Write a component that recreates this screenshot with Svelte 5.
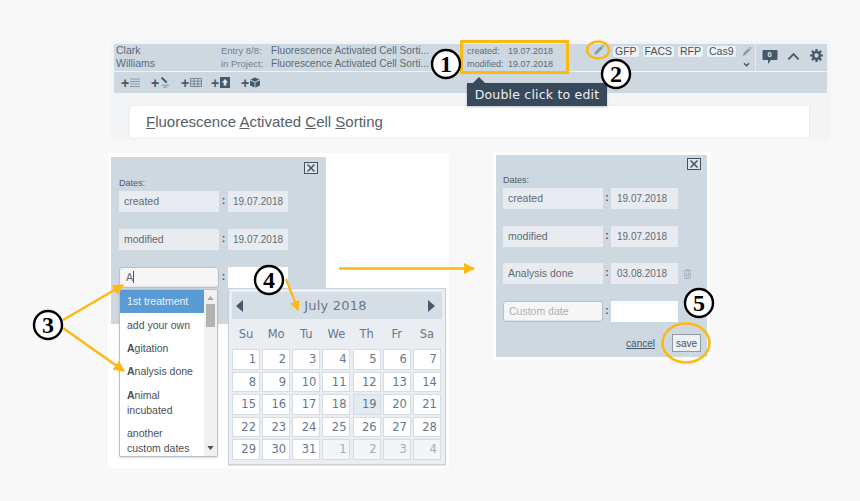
<script>
    const tags = ["GFP", "FACS", "RFP", "Cas9"];
    const weekdays = ["Su", "Mo", "Tu", "We", "Th", "Fr", "Sa"];
    const options = [
        { rest: "1st treatment", active: true },
        { rest: "add your own" },
        { first: "A", rest: "gitation" },
        { first: "A", rest: "nalysis done" },
        { first: "A", rest: "nimal", second: "incubated" },
        { rest: "another", second: "custom dates" }
    ];

    let days = [];
    for (let d = 1; d <= 31; d++) days.push({ n: d });
    for (let d = 1; d <= 4; d++) days.push({ n: d, muted: true });
</script>

<div class="figure">
    <!-- top: entry header -->
    <section class="entry">
        <div class="bar">
            <div class="row-main">
                <div class="owner">Clark<br />Williams</div>
                <div class="labels">Entry 8/8:<br />in Project:</div>
                <div class="titles">Fluorescence Activated Cell Sorti...<br />Fluorescence Activated Cell Sorti...</div>
                <div class="stamps">
                    <span>created:</span><span>19.07.2018</span>
                    <span>modified:</span><span>19.07.2018</span>
                </div>
                <svg class="pencil" viewBox="0 0 12 12"><path d="M.5 11.500l.7-3.200L8 1.500 10.500 4 3.700 10.800zM8.800.8l.7-.5a1 1 0 0 1 1.200 0l1 1a1 1 0 0 1 0 1.200l-.5.700z" fill="#8a98a5" /></svg>
                <div class="tags">
                    {#each tags as tag}
                        <span class="tag">{tag}</span>
                    {/each}
                </div>
                <div class="tag-tools">
                    <svg viewBox="0 0 12 12"><path d="M.5 11.500l.7-3.200L8 1.500 10.500 4 3.700 10.800zM8.800.8l.7-.5a1 1 0 0 1 1.200 0l1 1a1 1 0 0 1 0 1.200l-.5.700z" fill="#8a98a5" /></svg>
                    <svg class="more" viewBox="0 0 12 8"><path d="M2 2l4 4 4-4" fill="none" stroke="#46535f" stroke-width="2.200" /></svg>
                </div>
                <div class="actions">
                    <span class="comment">
                        <svg viewBox="0 0 16 16"><path d="M1.500 1h13a1 1 0 0 1 1 1v8a1 1 0 0 1-1 1H9l-3 4v-4H1.500a1 1 0 0 1-1-1V2a1 1 0 0 1 1-1z" fill="#46596a" /></svg>
                        <b>0</b>
                    </span>
                    <svg class="up" viewBox="0 0 14 9"><path d="M1.500 7.500L7 2l5.500 5.500" fill="none" stroke="#46596a" stroke-width="2" /></svg>
                    <svg class="gear" viewBox="0 0 14 14">
                        <circle cx="7" cy="7" r="3.600" fill="none" stroke="#46596a" stroke-width="2.600" />
                        <path d="M7 0v3M7 11v3M0 7h3M11 7h3M2 2l2 2M10 10l2 2M12 2l-2 2M4 10l-2 2" stroke="#46596a" stroke-width="2.400" />
                    </svg>
                </div>
            </div>
            <div class="toolbar">
                <span class="tool"><i>+</i>
                    <svg viewBox="0 0 10 10"><path d="M0 1.500h10M0 4h10M0 6.500h10M0 9h10" stroke="#8d9aa6" stroke-width="1" /></svg>
                </span>
                <span class="tool"><i>+</i>
                    <svg viewBox="0 0 10 13"><path d="M0 1.500L1.800 0l6 5.500-1.600 2z" fill="#46596a" /><path d="M1 10c2-2 3 1 4.500 0s2.500-1 4 0M3 12.500c2-1 3 0 5-1" fill="none" stroke="#6f7d8a" stroke-width="1" /></svg>
                </span>
                <span class="tool"><i>+</i>
                    <svg class="wide" viewBox="0 0 12 9"><path d="M.5.500h11v8H.500zM.5 3.200h11M.5 5.900h11M4.200.5v8M7.900.5v8" fill="none" stroke="#7a8794" stroke-width="1" /></svg>
                </span>
                <span class="tool"><i>+</i>
                    <svg viewBox="0 0 10 11"><path d="M0 0h10v11H0z" fill="#46596a" /><path d="M5 2l3.200 3.500H6.300v3H3.700v-3H1.800z" fill="#dfe6ec" /></svg>
                </span>
                <span class="tool"><i>+</i>
                    <svg viewBox="0 0 12 12"><path d="M6 0l5.500 2.500L6 5 .5 2.500z" fill="#46596a" /><path d="M0 3.500l5.500 2.500v6L0 9.500zM12 3.500L6.500 6v6l5.500-2.500z" fill="#46596a" /></svg>
                </span>
            </div>
        </div>
        <div class="entry-body">
            <h1><u>F</u>luorescence <u>A</u>ctivated <u>C</u>ell <u>S</u>orting</h1>
        </div>
    </section>

    <div class="tooltip">Double click to edit</div>

    <!-- left: picking a custom date -->
    <section class="sheet">
        <div class="dialog dialog-left">
            <div class="close-row">
                <span class="close"><svg viewBox="0 0 12 10"><path d="M2.500 1.500l7 7M9.500 1.500l-7 7" stroke="#46535f" stroke-width="1.500" /></svg></span>
            </div>
            <div class="dates-label">Dates:</div>
            <div class="date-row">
                <span class="name">created</span><span class="colon">:</span><span class="value">19.07.2018</span>
            </div>
            <div class="date-row">
                <span class="name">modified</span><span class="colon">:</span><span class="value">19.07.2018</span>
            </div>
            <div class="date-row">
                <span class="name input typed">A<span class="caret"></span></span><span class="colon">:</span><span class="value blank"></span>
            </div>
        </div>

        <div class="dropdown">
            <ul>
                {#each options as opt}
                    <li class:active={opt.active}>
                        <div>{#if opt.first}<b>{opt.first}</b>{/if}{opt.rest}</div>
                        {#if opt.second}<div>{opt.second}</div>{/if}
                    </li>
                {/each}
            </ul>
            <div class="scrollbar">
                <svg viewBox="0 0 8 5"><path d="M4 0l4 5H0z" fill="#a8a8a8" /></svg>
                <span class="thumb"></span>
                <svg class="down" viewBox="0 0 8 5"><path d="M4 5L0 0h8z" fill="#505050" /></svg>
            </div>
        </div>

        <div class="calendar">
            <div class="cal-head">
                <svg viewBox="0 0 7 12"><path d="M7 0v12L0 6z" fill="#45596c" /></svg>
                <span>July 2018</span>
                <svg viewBox="0 0 7 12"><path d="M0 0v12l7-6z" fill="#45596c" /></svg>
            </div>
            <div class="cal-days">
                {#each weekdays as w}
                    <span>{w}</span>
                {/each}
            </div>
            <div class="cal-grid">
                {#each days as d}
                    <span class="cell" class:muted={d.muted} class:today={d.n === 19 && !d.muted}>{d.n}</span>
                {/each}
            </div>
        </div>
    </section>

    <!-- right: result -->
    <section class="dialog dialog-right">
        <div class="close-row">
            <span class="close"><svg viewBox="0 0 12 10"><path d="M2.500 1.500l7 7M9.500 1.500l-7 7" stroke="#46535f" stroke-width="1.500" /></svg></span>
        </div>
        <div class="dates-label">Dates:</div>
        <div class="date-row">
            <span class="name">created</span><span class="colon">:</span><span class="value">19.07.2018</span>
        </div>
        <div class="date-row">
            <span class="name">modified</span><span class="colon">:</span><span class="value">19.07.2018</span>
        </div>
        <div class="date-row">
            <span class="name">Analysis done</span><span class="colon">:</span><span class="value">03.08.2018</span>
            <svg class="trash" viewBox="0 0 10 11"><path d="M1 2h8M3.500 2V.8h3V2M2 3v7.500h6V3M4 4v5M6 4v5" fill="none" stroke="#98a6b2" stroke-width=".9" /></svg>
        </div>
        <div class="date-row">
            <span class="name input placeholder">Custom date</span><span class="colon">:</span><span class="value blank"></span>
        </div>
        <div class="dialog-foot">
            <a href="#cancel">cancel</a>
            <button type="button">save</button>
        </div>
    </section>

    <!-- callouts drawn over the screenshots -->
    <svg class="callouts" viewBox="0 0 860 501">
        <defs>
            <marker id="head" viewBox="0 0 10 10" refX="9" refY="5" markerWidth="4.500" markerHeight="4.500" orient="auto">
                <path d="M0 0l10 5-10 5z" fill="#fdb913" />
            </marker>
        </defs>
        <g fill="none" stroke="#fdb913">
            <rect x="461.500" y="41.500" width="106" height="31" stroke-width="3" />
            <ellipse cx="598" cy="50" rx="11" ry="8.500" stroke-width="2.500" />
            <ellipse cx="686" cy="343" rx="23.500" ry="19.500" stroke-width="2.500" />
            <path d="M339 268.500H474" stroke-width="2.500" marker-end="url(#head)" />
            <path d="M63 320L123 285" stroke-width="2.500" marker-end="url(#head)" />
            <path d="M63 328L124 371" stroke-width="2.500" marker-end="url(#head)" />
            <path d="M286 279L298 310" stroke-width="2.200" marker-end="url(#head)" />
        </g>
        {#each [[446, 64, 1], [616, 74, 2], [48, 325, 3], [269, 280, 4], [699, 303, 5]] as [cx, cy, n]}
            <circle {cx} {cy} r="14" fill="#fff" stroke="#000" stroke-width="2.400" />
            <text x={cx} y={cy + 8} text-anchor="middle">{n}</text>
        {/each}
    </svg>
</div>

<style>
    :global(body) {
        margin: 0;
        background: #f8f8f8;
    }
    .figure {
        position: relative;
        width: 860px;
        height: 501px;
        overflow: hidden;
        font-family: "Liberation Sans", Arial, sans-serif;
        color: #5d6b78;
    }

    .entry {
        position: absolute;
        left: 111px;
        top: 41px;
        width: 719px;
        height: 99px;
        box-sizing: border-box;
        padding: 3px 3px 0 3px;
        background: #f2f4f6;
    }
    .bar {
        background: #cdd8e1;
    }
    .row-main {
        display: flex;
        height: 27px;
        border-bottom: 1px solid #f0f3f5;
        font-size: 10.500px;
        line-height: 13px;
    }
    .owner {
        width: 105px;
        padding-left: 2px;
    }
    .labels {
        width: 50px;
        font-size: 9.500px;
        color: #74818d;
    }
    .titles {
        width: 196px;
        font-size: 10.200px;
        white-space: nowrap;
    }
    .stamps {
        display: grid;
        grid-template-columns: 41px auto;
        align-content: start;
        width: 127px;
        padding-top: 1px;
        font-size: 9px;
        line-height: 13px;
    }
    .pencil {
        width: 10px;
        height: 10px;
        margin-top: 1px;
    }
    .tags {
        display: flex;
        gap: 4px;
        margin-left: 9px;
        padding-top: 2px;
    }
    .tag {
        height: 11px;
        padding: 0 2px;
        background: #eef1f4;
        border-radius: 2px;
        font-size: 10.500px;
        line-height: 11px;
        color: #46535f;
    }
    .tag-tools {
        display: flex;
        flex-direction: column;
        align-items: center;
        gap: 6px;
        width: 14px;
        margin-left: 4px;
        padding-top: 3px;
    }
    .tag-tools svg {
        width: 10px;
        height: 9px;
    }
    .tag-tools svg.more {
        width: 9px;
        height: 5px;
    }
    .actions {
        display: flex;
        align-items: flex-start;
        gap: 9.500px;
        margin-left: 1px;
        padding: 5px 0 0 6px;
        border-left: 1px solid #e4eaef;
    }
    .comment {
        position: relative;
        width: 16px;
        height: 16px;
    }
    .comment svg {
        display: block;
        width: 16px;
        height: 16px;
    }
    .comment b {
        position: absolute;
        left: 0;
        right: 0;
        top: 1px;
        text-align: center;
        font-size: 7.500px;
        line-height: 9px;
        color: #e6ebef;
    }
    .up {
        width: 13px;
        height: 9px;
        margin-top: 3px;
    }
    .gear {
        width: 13px;
        height: 13px;
    }
    .toolbar {
        display: flex;
        align-items: center;
        height: 21px;
        padding-left: 7px;
    }
    .tool {
        display: flex;
        align-items: center;
        gap: 1px;
        width: 30px;
    }
    .tool i {
        font-style: normal;
        font-weight: bold;
        font-size: 14px;
        line-height: 14px;
        color: #46596a;
    }
    .tool svg {
        width: 10px;
        height: 11px;
    }
    .tool svg.wide {
        width: 12px;
        height: 9px;
    }
    .entry-body {
        margin: 12px 17px 0 15px;
        height: 32px;
        box-sizing: border-box;
        padding: 7px 16px 0;
        background: #fff;
        border: 1px solid #e9edf0;
        border-bottom: 0;
    }
    h1 {
        margin: 0;
        font-size: 15px;
        font-weight: normal;
        line-height: 18px;
        color: #545f69;
    }

    .tooltip {
        position: absolute;
        left: 467px;
        top: 83px;
        width: 140px;
        height: 23px;
        background: #37495a;
        font-family: "DejaVu Sans", sans-serif;
        font-size: 12.500px;
        letter-spacing: 0.2px;
        line-height: 23px;
        text-align: center;
        color: #eef1f3;
        box-shadow: 0 1px 2px rgba(0, 0, 0, 0.25);
    }
    .tooltip::before {
        content: "";
        position: absolute;
        left: 6px;
        top: -6px;
        border: 6px solid transparent;
        border-top: 0;
        border-bottom-color: #37495a;
    }

    .sheet {
        position: absolute;
        left: 108px;
        top: 153px;
        width: 341px;
        height: 315px;
        background: #fff;
    }
    .dialog {
        box-sizing: border-box;
        background: #cdd8e1;
        font-size: 10.500px;
    }
    .dialog-left {
        width: 215px;
        height: 167px;
        margin: 4px 0 0 3px;
        padding: 5px 8px 0;
    }
    .dialog-right {
        position: absolute;
        left: 496px;
        top: 155px;
        width: 211px;
        height: 202px;
        padding: 3px 6px 0 7px;
        box-shadow: 0 0 0 3px #fff;
    }
    .close-row {
        display: flex;
        justify-content: flex-end;
        height: 14px;
    }
    .close {
        display: block;
        width: 14px;
        height: 12px;
        box-sizing: border-box;
        border: 1px solid #46535f;
        background: #dde4ea;
    }
    .close svg {
        display: block;
    }
    .dates-label {
        height: 15px;
        font-size: 9px;
        line-height: 14px;
        margin-top: 1px;
        color: #4e5c69;
    }
    .dialog-left .dates-label {
        margin-top: 0;
    }
    .date-row {
        display: flex;
        align-items: center;
        height: 21px;
        margin-bottom: 17px;
    }
    .dialog-right .date-row {
        margin-bottom: 16.600px;
    }
    .name {
        box-sizing: border-box;
        width: 100px;
        height: 21px;
        padding-left: 5px;
        background: #e8ecf0;
        line-height: 21px;
        color: #5d6b78;
    }
    .colon {
        width: 8px;
        margin-top: -3px;
        text-align: center;
        font-weight: bold;
        color: #46535f;
    }
    .dialog-left .colon {
        width: 9px;
    }
    .value {
        box-sizing: border-box;
        width: 60px;
        height: 21px;
        padding-left: 5px;
        background: #e8ecf0;
        font-size: 10px;
        line-height: 21px;
        color: #5d6b78;
    }
    .dialog-right .value {
        width: 67px;
        padding-left: 6px;
    }
    .value.blank {
        background: #fff;
    }
    .name.input {
        background: #f6f6f6;
        border: 1px solid #b9c0c6;
        border-radius: 3px;
        line-height: 19px;
        box-shadow: inset 0 -1px 1px rgba(0, 0, 0, 0.08);
    }
    .typed {
        padding-left: 6px;
    }
    .caret {
        display: inline-block;
        width: 1px;
        height: 12px;
        vertical-align: -2px;
        background: #46535f;
    }
    .placeholder {
        color: #a9b2ba;
    }
    .trash {
        width: 9px;
        height: 10px;
        margin-left: 5px;
    }
    .dialog-foot {
        display: flex;
        justify-content: flex-end;
        align-items: center;
        gap: 17px;
        margin-top: -4px;
    }
    .dialog-foot a {
        color: #46596a;
        font-size: 10px;
    }
    .dialog-foot button {
        box-sizing: border-box;
        width: 29px;
        height: 18px;
        padding: 0;
        background: #eef1f4;
        border: 1px solid #8e9ba7;
        font-family: inherit;
        font-size: 10px;
        color: #46535f;
    }

    .dropdown {
        position: absolute;
        left: 11px;
        top: 136px;
        display: flex;
        width: 99px;
        height: 168px;
        background: #fff;
        border: 1px solid #b9c0c6;
        box-sizing: border-box;
        border-radius: 2px;
        box-shadow: 0 1px 2px rgba(0, 0, 0, 0.15);
        overflow: hidden;
    }
    ul {
        width: 84px;
        margin: 0;
        padding: 0;
        list-style: none;
        font-size: 10.500px;
        line-height: 15px;
        color: #4a4f54;
    }
    li {
        padding: 4.200px 7px;
    }
    li.active {
        background: #5b9bd5;
        color: #e9f1f8;
    }
    li b {
        font-weight: bold;
    }
    .scrollbar {
        position: relative;
        flex: 1;
        background: #f0f0f0;
    }
    .scrollbar svg {
        position: absolute;
        left: 3px;
        top: 6px;
        width: 7px;
        height: 4px;
    }
    .scrollbar svg.down {
        top: auto;
        bottom: 6px;
    }
    .thumb {
        position: absolute;
        left: 2px;
        right: 2px;
        top: 14px;
        height: 23px;
        background: #b3b3b3;
    }

    .calendar {
        position: absolute;
        left: 120px;
        top: 135px;
        width: 218px;
        height: 177px;
        box-sizing: border-box;
        padding: 3px 3px 0;
        background: #eaeef2;
        border: 1px solid #c6d0d9;
        font-family: "DejaVu Sans", sans-serif;
        box-shadow: 0 1px 1px rgba(0, 0, 0, 0.1);
    }
    .cal-head {
        display: flex;
        justify-content: space-between;
        align-items: center;
        height: 27px;
        padding: 0 7px 0 4px;
        background: #d6dee5;
        font-size: 13px;
        letter-spacing: 0.2px;
        color: #66778a;
    }
    .cal-head svg {
        width: 7px;
        height: 12px;
    }
    .cal-days {
        display: grid;
        grid-template-columns: repeat(7, 28px);
        column-gap: 2.170px;
        height: 30px;
        font-size: 11.500px;
        line-height: 30px;
        text-align: center;
        color: #66778a;
    }
    .cal-grid {
        display: grid;
        grid-template-columns: repeat(7, 28px);
        grid-auto-rows: 20.500px;
        column-gap: 2.170px;
        row-gap: 2px;
    }
    .cell {
        box-sizing: border-box;
        padding-right: 3px;
        background: #fff;
        border: 1px solid #d5dde4;
        font-size: 11.500px;
        line-height: 19px;
        text-align: right;
        color: #66778a;
    }
    .cell.today {
        background: #e2eaf2;
    }
    .cell.muted {
        background: #f3f5f7;
        color: #a3adb6;
    }

    .callouts {
        position: absolute;
        left: 0;
        top: 0;
        width: 860px;
        height: 501px;
    }
    .callouts text {
        font-family: "Liberation Serif", serif;
        font-size: 24px;
        font-weight: bold;
        fill: #000;
    }
</style>
